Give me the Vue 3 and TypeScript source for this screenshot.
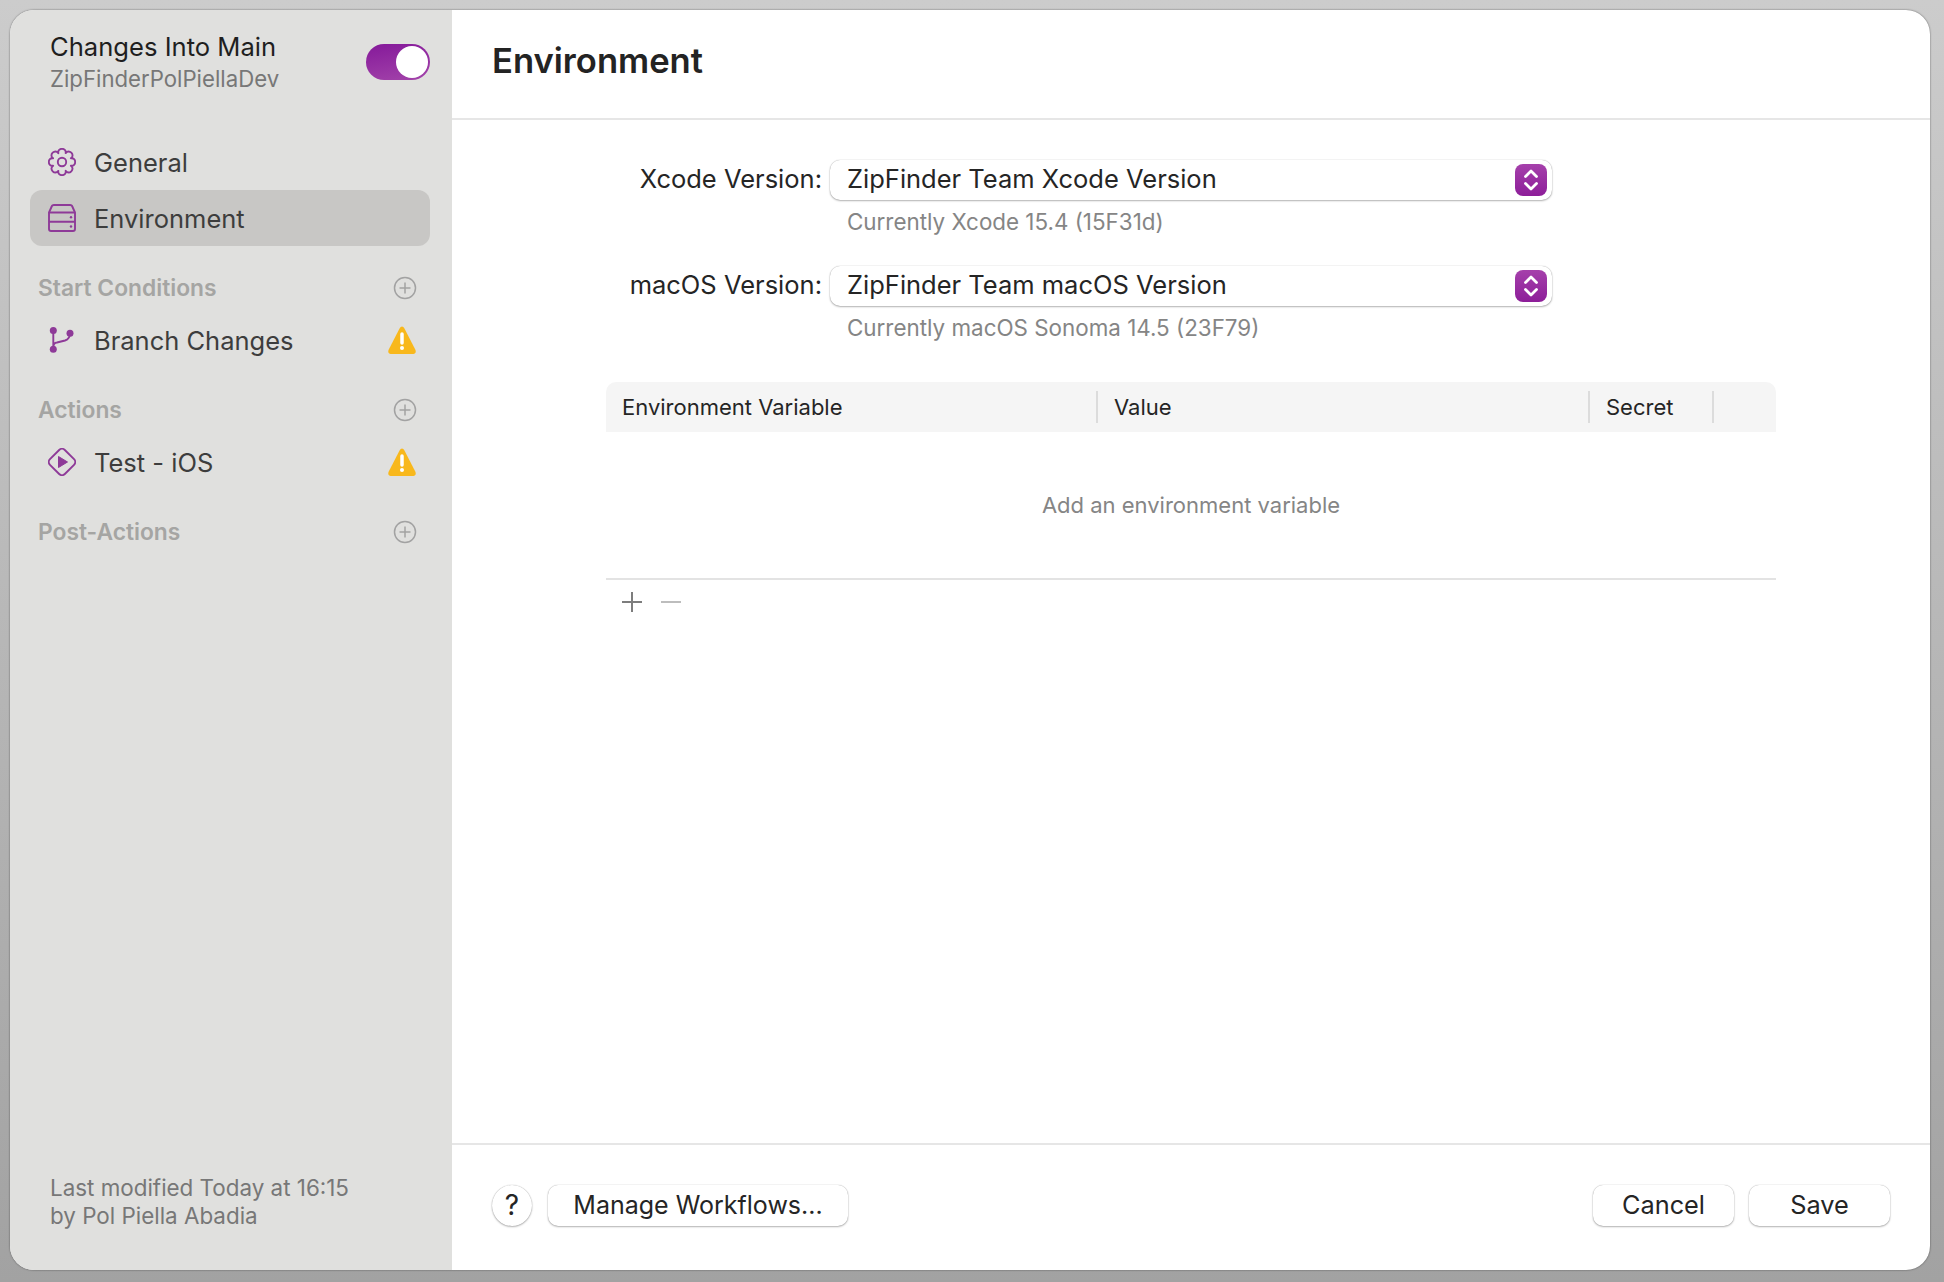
<template>
  <div class="desktop">
    <div class="window">
      <aside class="sidebar">
        <div class="workflow-head">
          <div class="workflow-names">
            <div class="workflow-title">Changes Into Main</div>
            <div class="workflow-sub">ZipFinderPolPiellaDev</div>
          </div>
          <div class="toggle"><span class="knob"></span></div>
        </div>

        <nav class="nav">
          <div class="row">
            <svg class="row-icon" viewBox="0 0 28 28" fill="none" stroke="currentColor" stroke-width="1.9" stroke-linejoin="round">
              <path :d="gearPath" />
              <circle cx="14" cy="14" r="4.2" />
            </svg>
            <span>General</span>
          </div>
          <div class="row selected">
            <svg class="row-icon" viewBox="0 0 28 28" fill="none" stroke="currentColor" stroke-width="1.9" stroke-linejoin="round">
              <path d="M1 8.500 L3.500 3 Q4 1 6 1 H22 Q24 1 24.500 3 L27 8.500 V25 Q27 27 25 27 H3 Q1 27 1 25 Z" />
              <path d="M1 8.500 H27 M1 17.800 H27" />
              <circle cx="23" cy="13.200" r="1.200" fill="currentColor" stroke="none" />
              <circle cx="23" cy="22.500" r="1.200" fill="currentColor" stroke="none" />
            </svg>
            <span>Environment</span>
          </div>
        </nav>

        <section v-for="group in groups" :key="group.title" class="group">
          <div class="group-head">
            <span>{{ group.title }}</span>
            <svg class="add" viewBox="0 0 24 24" fill="none" stroke="currentColor" stroke-width="1.5">
              <circle cx="12" cy="12" r="10.500" />
              <path d="M12 6.500v11M6.500 12h11" />
            </svg>
          </div>
          <div v-if="group.item" class="row item">
            <svg v-if="group.item.icon === 'branch'" class="row-icon" viewBox="0 0 28 28" fill="none" stroke="currentColor" stroke-width="1.9">
              <path d="M5.300 4.600V23.300M5.300 21Q5.300 17 9 16.500L17 14.500Q22 13 22 7.300" />
              <circle cx="5.300" cy="4.600" r="3.500" fill="currentColor" stroke="none" />
              <circle cx="5.300" cy="23.300" r="3.500" fill="currentColor" stroke="none" />
              <circle cx="22" cy="7.300" r="3.500" fill="currentColor" stroke="none" />
            </svg>
            <svg v-else class="row-icon" viewBox="0 0 28 28" fill="none" stroke="currentColor" stroke-width="1.9" stroke-linejoin="round">
              <rect x="3.500" y="3.500" width="21" height="21" rx="4" transform="rotate(45 14 14)" />
              <path d="M10.500 8.500 L19.500 14 L10.500 19.500 Z" fill="currentColor" stroke="currentColor" stroke-width="1" />
            </svg>
            <span class="item-label">{{ group.item.label }}</span>
            <svg class="warn" viewBox="0 0 28 28">
              <path d="M14 0.500 Q15.400 0.500 16.200 2 L27.500 24 Q28.500 27.500 25.500 28 H2.500 Q-.5 27.500 .5 24 L11.800 2 Q12.600 0.500 14 0.500 Z" fill="#f8b81c" />
              <path d="M14 8v9" stroke="#fff" stroke-width="3.500" stroke-linecap="round" />
              <circle cx="14" cy="22" r="2" fill="#fff" />
            </svg>
          </div>
        </section>

        <div class="modified">
          <div>Last modified Today at 16:15</div>
          <div>by Pol Piella Abadia</div>
        </div>
      </aside>

      <main class="main">
        <header class="main-head">Environment</header>

        <div class="content">
          <div v-for="field in fields" :key="field.label" class="field">
            <label class="field-label">{{ field.label }}</label>
            <div class="field-body">
              <div class="select">
                <span class="select-value">{{ field.value }}</span>
                <span class="stepper">
                  <svg viewBox="0 0 32 32" fill="none" stroke="#fff" stroke-width="2.800" stroke-linecap="round" stroke-linejoin="round">
                    <path d="M10.500 12.500L16 7l5.500 5.500M10.500 19.500L16 25l5.500-5.500" />
                  </svg>
                </span>
              </div>
              <div class="hint">{{ field.hint }}</div>
            </div>
          </div>

          <div class="table">
            <div class="thead">
              <div class="th col-name">Environment Variable</div>
              <div class="th col-value">Value</div>
              <div class="th col-secret">Secret</div>
              <div class="th col-rest"></div>
            </div>
            <div class="empty">Add an environment variable</div>
            <div class="table-tools">
              <svg class="tool" viewBox="0 0 22 22" stroke="#7d7d7d" stroke-width="2"><path d="M11 1v20M1 11h20" /></svg>
              <svg class="tool" viewBox="0 0 22 22" stroke="#bdbdbd" stroke-width="2"><path d="M1 11h20" /></svg>
            </div>
          </div>
        </div>

        <footer class="main-foot">
          <button class="btn help">?</button>
          <button class="btn manage">Manage Workflows...</button>
          <span class="spacer"></span>
          <button class="btn wide">Cancel</button>
          <button class="btn wide">Save</button>
        </footer>
      </main>
    </div>
  </div>
</template>

<script setup lang="ts">
interface SidebarItem {
  label: string;
  icon: 'branch' | 'play';
}

interface SidebarGroup {
  title: string;
  item?: SidebarItem;
}

const groups: SidebarGroup[] = [
  { title: 'Start Conditions', item: { label: 'Branch Changes', icon: 'branch' } },
  { title: 'Actions', item: { label: 'Test - iOS', icon: 'play' } },
  { title: 'Post-Actions' }
];

const fields = [
  { label: 'Xcode Version:', value: 'ZipFinder Team Xcode Version', hint: 'Currently Xcode 15.4 (15F31d)' },
  { label: 'macOS Version:', value: 'ZipFinder Team macOS Version', hint: 'Currently macOS Sonoma 14.5 (23F79)' }
];

// eight toothed gear, the outline is simpler to compute than to write out
function buildGear(teeth: number, outer: number, inner: number): string {
  const point = (r: number, a: number) =>
    `${(14 + r * Math.cos(a)).toFixed(2)} ${(14 + r * Math.sin(a)).toFixed(2)}`;
  const step = (Math.PI * 2) / teeth;
  let d = '';
  for (let i = 0; i < teeth; i++) {
    const a = i * step - Math.PI / 2;
    const start = point(inner, a - step * 0.5);
    const c1 = point(outer * 1.06, a - step * 0.4);
    const c2 = point(outer * 1.06, a + step * 0.4);
    const end = point(inner, a + step * 0.5);
    d += `${i === 0 ? 'M' + start : ''} C${c1} ${c2} ${end} `;
  }
  return d + 'Z';
}

const gearPath = buildGear(8, 14.5, 9.6);
</script>

<style scoped>
.desktop {
  height: 1282px;
  padding: 10px 14px 12px 10px;
  box-sizing: border-box;
  background: linear-gradient(#cccccc, #a2a2a2);
}

.window {
  height: 100%;
  display: flex;
  border-radius: 24px;
  overflow: hidden;
  background: #fff;
  box-shadow: 0 0 2px rgba(0, 0, 0, 0.55);
  font-family: Inter, "Liberation Sans", sans-serif;
}

.sidebar {
  width: 442px;
  flex-shrink: 0;
  display: flex;
  flex-direction: column;
  background: #e0e0de;
  padding: 0 22px 0 20px;
  box-sizing: border-box;
}

.workflow-head {
  display: flex;
  align-items: center;
  justify-content: space-between;
  height: 102px;
  padding: 0 0 0 20px;
}

.workflow-title {
  font-size: 25.6px;
  line-height: 36px;
  color: #1f1f1f;
}

.workflow-sub {
  font-size: 22.2px;
  line-height: 28px;
  color: #777;
}

.toggle {
  width: 64px;
  height: 36px;
  border-radius: 18px;
  background: linear-gradient(170deg, #85199a, #a344aa);
  position: relative;
  margin-top: 2px;
}

.knob {
  position: absolute;
  top: 2px;
  right: 2px;
  width: 32px;
  height: 32px;
  border-radius: 50%;
  background: #fff;
}

.nav {
  margin-top: 22px;
  display: flex;
  flex-direction: column;
}

.row {
  height: 56px;
  display: flex;
  align-items: center;
  padding: 0 14px 0 18px;
  border-radius: 12px;
  font-size: 25.5px;
  color: #3d3d3d;
}

.row.selected {
  background: #c8c7c5;
}

.row-icon {
  width: 28px;
  height: 28px;
  flex-shrink: 0;
  margin-right: 18px;
  color: #8e3a98;
}

.group {
  margin-top: 16px;
}

.group + .group {
  margin-top: 17px;
}

.group-head {
  height: 51px;
  display: flex;
  align-items: center;
  justify-content: space-between;
  padding: 0 13px 0 8px;
  font-size: 22.8px;
  font-weight: 600;
  color: #a5a5a3;
}

.add {
  width: 24px;
  height: 24px;
  color: #a2a2a2;
}

.row.item {
  height: 54px;
}

.item-label {
  flex: 1;
}

.warn {
  width: 28px;
  height: 28px;
  overflow: visible;
}

.modified {
  margin-top: auto;
  padding: 0 0 40px 20px;
  font-size: 22.4px;
  line-height: 28px;
  color: #777;
}

.main {
  flex: 1;
  display: flex;
  flex-direction: column;
  min-width: 0;
}

.main-head {
  height: 100px;
  padding: 0 0 8px 40px;
  border-bottom: 2px solid #e6e6e6;
  display: flex;
  align-items: center;
  font-size: 34.6px;
  font-weight: 600;
  color: #232323;
  flex-shrink: 0;
}

.content {
  flex: 1;
  padding: 40px 124px 0 154px;
}

.field {
  display: flex;
  align-items: flex-start;
  margin-bottom: 30px;
}

.field-label {
  width: 224px;
  flex-shrink: 0;
  padding-right: 8px;
  box-sizing: border-box;
  text-align: right;
  font-size: 25.5px;
  line-height: 38px;
  color: #252525;
}

.field-body {
  width: 722px;
}

.select {
  height: 40px;
  border-radius: 10px;
  background: #fff;
  box-shadow: 0 0 1px rgba(0, 0, 0, 0.35), 0 1px 2px rgba(0, 0, 0, 0.28);
  display: flex;
  align-items: center;
  justify-content: space-between;
  padding: 0 5px 0 17px;
  font-size: 25.5px;
  color: #252525;
}

.select-value {
  padding-bottom: 3px;
}

.stepper {
  width: 32px;
  height: 32px;
  border-radius: 8px;
  background: linear-gradient(#a540ab, #8d1e99);
  display: flex;
}

.hint {
  padding: 8px 0 0 17px;
  font-size: 22.4px;
  line-height: 28px;
  color: #858585;
}

.table {
  margin-top: 40px;
  width: 1170px;
}

.thead {
  height: 50px;
  display: flex;
  align-items: center;
  background: #f5f5f5;
  border-radius: 10px 10px 0 0;
  font-size: 22px;
  color: #252525;
}

.th {
  height: 32px;
  line-height: 32px;
  padding-left: 16px;
  border-right: 2px solid #dcdcdc;
  box-sizing: border-box;
}

.col-name {
  width: 492px;
}

.col-value {
  width: 492px;
}

.col-secret {
  width: 124px;
}

.col-rest {
  border-right: 0;
}

.empty {
  height: 146px;
  border-bottom: 2px solid #e3e3e3;
  display: flex;
  align-items: center;
  justify-content: center;
  font-size: 22px;
  color: #858585;
}

.table-tools {
  display: flex;
  gap: 17px;
  padding: 11px 0 0 15px;
}

.tool {
  width: 22px;
  height: 22px;
}

.main-foot {
  height: 127px;
  flex-shrink: 0;
  border-top: 2px solid #e6e6e6;
  display: flex;
  align-items: flex-start;
  padding: 40px 40px 0;
  gap: 15px;
  box-sizing: border-box;
}

.spacer {
  flex: 1;
}

.btn {
  height: 41px;
  border: 0;
  border-radius: 10px;
  background: #fff;
  box-shadow: 0 0 1px rgba(0, 0, 0, 0.35), 0 1px 2px rgba(0, 0, 0, 0.28);
  font-family: inherit;
  font-size: 25.3px;
  color: #252525;
  padding: 0 0 2px;
}

.help {
  width: 40px;
  margin-right: 1px;
  border-radius: 50%;
  font-size: 28px;
}

.manage {
  width: 300px;
  font-size: 25px;
}

.wide {
  width: 141px;
}
</style>

<style>
html,
body {
  margin: 0;
  overflow: hidden;
}
</style>
